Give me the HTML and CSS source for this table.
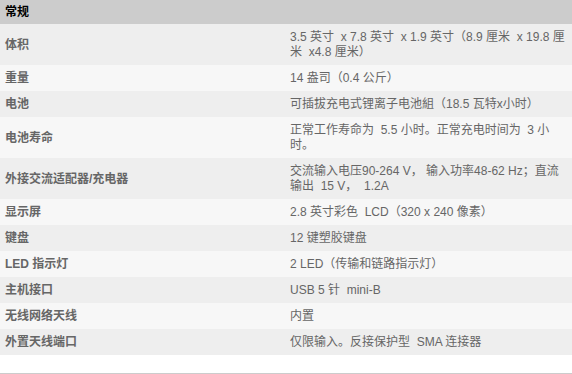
FILE: index.html
```html
<!DOCTYPE html>
<html lang="zh-CN">
<head>
<meta charset="utf-8">
<title>常规</title>
<link rel="stylesheet" href="styles.css">
</head>
<body>
<div class="specs">
  <div class="head">常规</div>
  <div class="row odd"><div class="label">体积</div><div class="value">3.5 英寸&nbsp; x 7.8 英寸&nbsp; x 1.9 英寸（8.9 厘米&nbsp; x 19.8 厘米&nbsp; x4.8 厘米）</div></div>
  <div class="row even"><div class="label">重量</div><div class="value">14 盎司（0.4 公斤）</div></div>
  <div class="row odd"><div class="label">电池</div><div class="value">可插拔充电式锂离子电池組（18.5 瓦特x小时）</div></div>
  <div class="row even"><div class="label">电池寿命</div><div class="value">正常工作寿命为&nbsp; 5.5 小时。正常充电时间为&nbsp; 3 小时。</div></div>
  <div class="row odd"><div class="label">外接交流适配器/充电器</div><div class="value">交流输入电压90-264 V， 输入功率48-62 Hz；直流输出&nbsp; 15 V，&nbsp; 1.2A</div></div>
  <div class="row even"><div class="label">显示屏</div><div class="value">2.8 英寸彩色&nbsp; LCD（320 x 240 像素）</div></div>
  <div class="row odd"><div class="label">键盘</div><div class="value">12 键塑胶键盘</div></div>
  <div class="row even"><div class="label">LED 指示灯</div><div class="value">2 LED（传输和链路指示灯）</div></div>
  <div class="row odd"><div class="label">主机接口</div><div class="value">USB 5 针&nbsp; mini-B</div></div>
  <div class="row even"><div class="label">无线网络天线</div><div class="value">内置</div></div>
  <div class="row odd"><div class="label">外置天线端口</div><div class="value">仅限输入。反接保护型&nbsp; SMA 连接器</div></div>
  <div class="foot"></div>
</div>
</body>
</html>
```
FILE: styles.css
```css
html, body {
  margin: 0;
  padding: 0;
  background: #fff;
}
body {
  font-family: "Liberation Sans", "Noto Sans CJK SC", sans-serif;
  font-size: 12px;
  line-height: 15px;
  color: #666;
}
.specs {
  width: 572px;
}
.head {
  background: #ccc;
  color: #000;
  font-weight: bold;
  padding: 5px 5px 4px;
}
.row {
  display: grid;
  grid-template-columns: 285px 1fr;
  align-items: center;
  padding: 6px 0 5px;
}
.odd { background: #eee; }
.even { background: #f7f7f7; }
.label {
  padding-left: 5px;
  font-weight: bold;
  color: #666;
}
.value {
  padding: 0 3px 0 5px;
  color: #666;
}
.foot {
  margin-top: 18px;
  height: 4px;
  background: #ccc;
}
```
